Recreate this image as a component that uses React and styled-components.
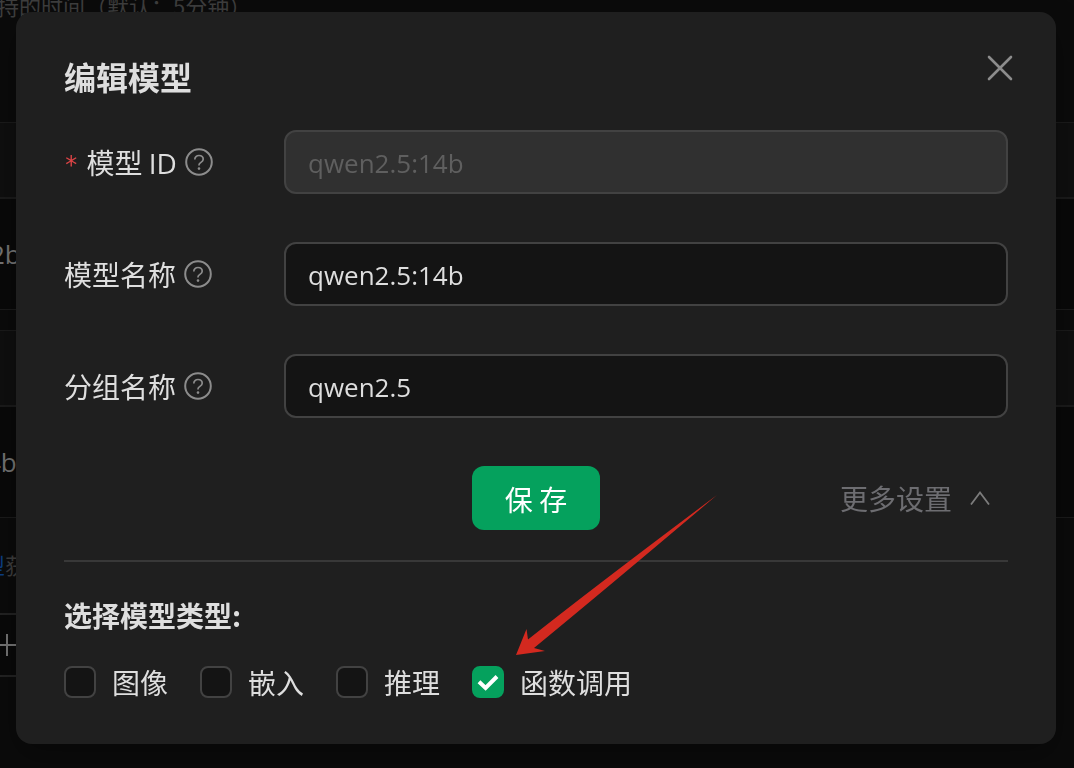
import React, { useState } from 'react'
import styled, { createGlobalStyle } from 'styled-components';

const cjk = '"Noto Sans CJK SC", "Noto Sans", sans-serif';
const latin = '"Open Sans", "Noto Sans CJK SC", sans-serif';

const MODEL_TYPES = [
    { id: 'vision', label: '图像' },
    { id: 'embedding', label: '嵌入' },
    { id: 'reasoning', label: '推理' },
    { id: 'function', label: '函数调用', marked: true },
];

function HelpIcon() {
    return (
        <HelpSvg viewBox="0 0 28 28" aria-hidden="true">
            <circle cx="14" cy="14" r="12.8" strokeWidth="2" />
            <path d="M9.8 11.4c0-2.4 1.8-3.9 4.2-3.9s4.2 1.5 4.2 3.8c0 3-4.2 3.1-4.2 5.6v.5" strokeWidth="1.7" />
            <circle className="dot" cx="14" cy="20.6" r="1.3" />
        </HelpSvg>
    )
}

function Field({ id, label, required, ...rest }) {
    return (
        <FieldRow>
            <FieldLabel htmlFor={id}>
                {required && <Required>*</Required>}
                <span>{label}</span>
                <HelpIcon />
            </FieldLabel>
            <TextInput id={id} type="text" {...rest} />
        </FieldRow>
    )
}

function Backdrop() {
    return (
        <PageStyled>
            <Hint>持的时间（默认：5分钟）</Hint>
            <Group>
                <GroupHead />
                <GroupBody $shift={10}>2b</GroupBody>
            </Group>
            <Group>
                <GroupHead />
                <GroupBody $shift={14}>4b</GroupBody>
            </Group>
            <Note><a href="#models">型</a>获</Note>
            <AddButton type="button" aria-label="添加">
                <svg viewBox="0 0 24 24"><path d="M12 1v22M1 12h22" /></svg>
            </AddButton>
        </PageStyled>
    )
}

function App() {
    const [name, setName] = useState('qwen2.5:14b');
    const [group, setGroup] = useState('qwen2.5');
    const [types, setTypes] = useState(['function']);
    const [open, setOpen] = useState(true);

    const toggle = (id) =>
        setTypes(types.includes(id) ? types.filter((t) => t !== id) : [...types, id]);

    return (
        <>
            <GlobalStyle />
            <Backdrop />
            <Overlay>
                <Modal role="dialog" aria-labelledby="title">
                    <Title id="title">编辑模型</Title>
                    <CloseButton type="button" aria-label="关闭">
                        <svg viewBox="0 0 26 26"><path d="M2 2l22 22M24 2l-22 22" /></svg>
                    </CloseButton>
                    <Fields>
                        <Field
                            id="model-id"
                            label={<>模型 <Latin>ID</Latin></>}
                            required
                            disabled
                            defaultValue="qwen2.5:14b"
                        />
                        <Field id="model-name" label="模型名称" value={name} onChange={(e) => setName(e.target.value)} />
                        <Field id="group-name" label="分组名称" value={group} onChange={(e) => setGroup(e.target.value)} />
                    </Fields>
                    <Actions>
                        <SaveButton type="button">保 存</SaveButton>
                        <MoreButton type="button" aria-expanded={open} onClick={() => setOpen(!open)}>
                            更多设置
                            <svg viewBox="0 0 20 14"><path d="M1 13.5l9-12 9 12" /></svg>
                        </MoreButton>
                    </Actions>
                    {open && (
                        <TypeSection>
                            <TypeTitle>选择模型类型:</TypeTitle>
                            <TypeList>
                                {MODEL_TYPES.map((t) => (
                                    <TypeOption key={t.id}>
                                        <CheckCell>
                                            <input
                                                type="checkbox"
                                                checked={types.includes(t.id)}
                                                onChange={() => toggle(t.id)}
                                            />
                                            <svg viewBox="0 0 32 32"><path d="M7 15.8l6.600 6.200L25 10.500" /></svg>
                                        </CheckCell>
                                        {t.label}
                                        {t.marked && (
                                            <Arrow viewBox="0 0 204 162" aria-hidden="true">
                                                <path d="M0 161L10.500 135L12 145.500Q82 90 201 1Q97 89 18 154L29 157Z" />
                                            </Arrow>
                                        )}
                                    </TypeOption>
                                ))}
                            </TypeList>
                        </TypeSection>
                    )}
                </Modal>
            </Overlay>
        </>
    )
}

const GlobalStyle = createGlobalStyle`
    *{
        box-sizing: border-box;
    }
    body{
        margin: 0;
        background: #0b0b0b;
        color: #dedede;
        font-family: ${cjk};
        font-size: 28px;
    }
    button, input{
        font-family: inherit;
        font-size: inherit;
        color: inherit;
    }
    h2, h3, p{
        margin: 0;
    }
`;

/* settings page under the mask */

const PageStyled = styled.main`
    height: 100vh;
    overflow: hidden;
    color: #757575;
`;

const Hint = styled.p`
    height: 122px;
    margin-left: -3px;
    font-size: 22px;
    line-height: 10px;
    color: #3e3e3e;
`;

const Group = styled.section`
    margin-bottom: 20px;
    border: solid #1b1b1b;
    border-width: 1px 0;
    background: #090909;
`;

const GroupHead = styled.div`
    height: 76px;
    border-bottom: 2px solid #1b1b1b;
    background: #0f0f0f;
`;

const GroupBody = styled.div`
    height: 110px;
    margin-left: ${(p) => -p.$shift}px;
    font-family: ${latin};
    font-size: 26px;
    line-height: 110px;
`;

const Note = styled.p`
    margin: 28px 0 31px -17px;
    font-size: 22px;
    line-height: 36px;
    color: #3e3e3e;
    a{
        color: #0c3f86;
        text-decoration: none;
    }
`;

const AddButton = styled.button`
    width: 220px;
    height: 64px;
    padding: 0;
    border: solid #232323;
    border-width: 2px 0;
    background: #090909;
    text-align: left;
    svg{
        display: block;
        width: 24px;
        margin-left: -5px;
        fill: none;
        stroke: #757575;
        stroke-width: 2;
    }
`;

/* edit dialog */

const Overlay = styled.div`
    position: fixed;
    inset: 0;
    padding: 12px 18px 24px 16px;
    overflow: hidden;
`;

const Modal = styled.section`
    position: relative;
    padding: 40px 48px 44px;
    border-radius: 16px;
    background: #1f1f1f;
    box-shadow: 0 12px 32px rgba(0, 0, 0, .3);
`;

const Title = styled.h2`
    margin-bottom: 30px;
    font-size: 32px;
    font-weight: 700;
    line-height: 48px;
`;

const CloseButton = styled.button`
    position: absolute;
    top: 34px;
    right: 34px;
    display: grid;
    place-items: center;
    width: 44px;
    height: 44px;
    padding: 0;
    border: 0;
    background: none;
    cursor: pointer;
    svg{
        width: 26px;
        fill: none;
        stroke: #8c8c8c;
        stroke-width: 2.6;
        stroke-linecap: round;
    }
`;

const Fields = styled.div`
    display: flex;
    flex-direction: column;
    gap: 48px;
`;

const FieldRow = styled.div`
    display: grid;
    grid-template-columns: 220px 1fr;
    align-items: center;
`;

const FieldLabel = styled.label`
    display: flex;
    align-items: center;
    gap: 8px;
    line-height: 40px;
    white-space: nowrap;
`;

const Required = styled.span`
    padding-top: 6px;
    color: #dc4446;
    font-family: "DejaVu Sans Mono", monospace;
    font-size: 24px;
`;

const Latin = styled.span`
    font-family: ${latin};
`;

const HelpSvg = styled.svg`
    width: 28px;
    height: 28px;
    fill: none;
    stroke: #8c8c8c;
    .dot{
        fill: #8c8c8c;
        stroke: none;
    }
`;

const TextInput = styled.input`
    width: 100%;
    height: 64px;
    padding: 2px 22px 0;
    border: 2px solid #424242;
    border-radius: 12px;
    outline: none;
    background: #141414;
    font-family: ${latin};
    font-size: 26px;
    &:disabled{
        background: #303030;
        color: #5f5f5f;
    }
`;

const Actions = styled.div`
    display: grid;
    grid-template-columns: 1fr auto 1fr;
    align-items: center;
    margin: 48px 0 30px;
`;

const SaveButton = styled.button`
    grid-column: 2;
    width: 128px;
    height: 64px;
    padding: 2px 0 0;
    border: 0;
    border-radius: 12px;
    background: #05a15d;
    color: #fff;
    cursor: pointer;
`;

const MoreButton = styled.button`
    display: flex;
    align-items: center;
    justify-self: end;
    gap: 18px;
    padding: 0 18px 0 0;
    border: 0;
    background: none;
    color: #6d6d71;
    cursor: pointer;
    svg{
        width: 20px;
        fill: none;
        stroke: #7c7c7c;
        stroke-width: 1.8;
    }
`;

const TypeSection = styled.div`
    padding-top: 32px;
    border-top: 2px solid #383838;
`;

const TypeTitle = styled.h3`
    margin-bottom: 28px;
    font-size: 28px;
    font-weight: 700;
    line-height: 42px;
`;

const TypeList = styled.div`
    display: flex;
    gap: 32px;
`;

const TypeOption = styled.label`
    position: relative;
    display: flex;
    align-items: center;
    gap: 16px;
    line-height: 36px;
    cursor: pointer;
`;

const CheckCell = styled.span`
    display: grid;
    width: 32px;
    height: 32px;
    input, svg{
        grid-area: 1 / 1;
        width: 32px;
        height: 32px;
        margin: 0;
    }
    input{
        appearance: none;
        border: 2px solid #424242;
        border-radius: 8px;
        background: #141414;
    }
    svg{
        visibility: hidden;
        fill: none;
        stroke: #fff;
        stroke-width: 4;
        pointer-events: none;
    }
    input:checked{
        border-color: #05a15d;
        background: #05a15d;
    }
    input:checked + svg{
        visibility: visible;
    }
`;

/* pointer drawn over the dialog */
const Arrow = styled.svg`
    position: absolute;
    left: 44px;
    bottom: 44px;
    width: 204px;
    height: 162px;
    fill: #d3291f;
    pointer-events: none;
`;

export default App;
